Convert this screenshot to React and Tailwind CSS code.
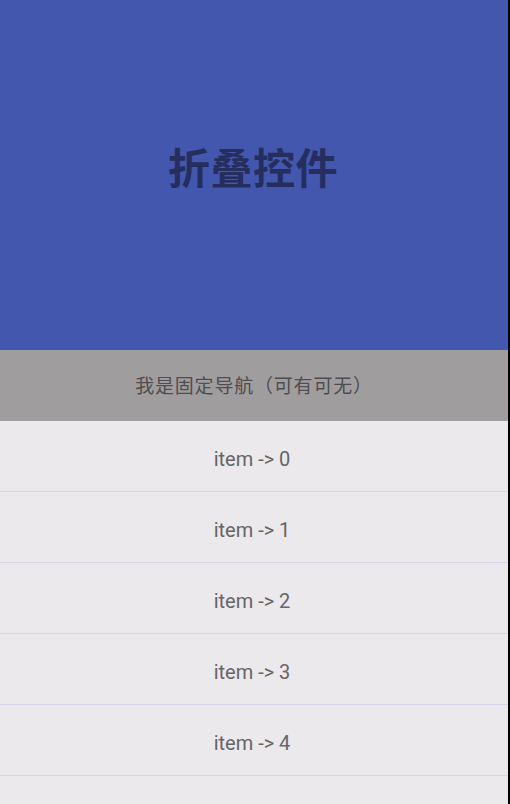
import React from 'react';

const items = [0, 1, 2, 3, 4];

export default function App() {
  return (
    <div className="w-[510px] h-[804px] overflow-hidden flex bg-black">
      <div className="w-[508px] h-full flex flex-col bg-[#ebe9ec] font-['Roboto','Noto_Sans_CJK_SC',sans-serif]">
        {/* Collapsing header */}
        <div className="h-[350px] shrink-0 bg-[#4257ad] flex justify-center pt-[136px] pr-[2px]">
          <h1 className="text-[42px] tracking-[0.5px] leading-[60px] font-bold text-[#252e5e] font-['Noto_Sans_CJK_SC',sans-serif]">
            折叠控件
          </h1>
        </div>

        {/* Sticky nav */}
        <div className="h-[71px] shrink-0 bg-[#a09d9f] flex items-center justify-center">
          <span className="text-[19px] tracking-[0.8px] text-[#4f4d50] font-['Noto_Sans_CJK_SC',sans-serif]">
            我是固定导航（可有可无）
          </span>
        </div>

        {/* List */}
        <div className="flex flex-col">
          {items.map((i) => (
            <div
              key={i}
              className="h-[71px] shrink-0 flex items-center justify-center pt-[5px] pr-[4px] border-b border-[#d7d3ea]"
            >
              <span className="text-[20px] text-[#666568]">item -&gt; {i}</span>
            </div>
          ))}
        </div>
      </div>
    </div>
  );
}
